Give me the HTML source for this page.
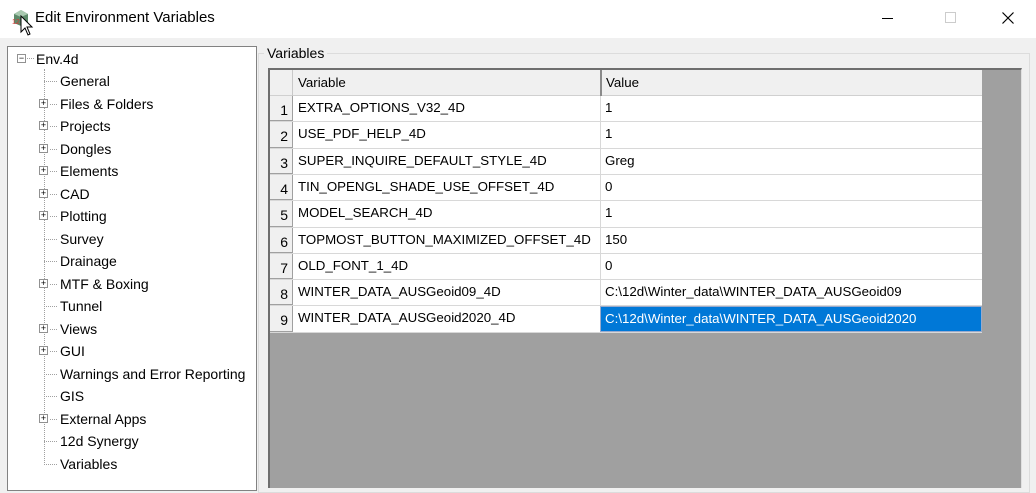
<!DOCTYPE html>
<html><head><style>
*{margin:0;padding:0;box-sizing:border-box}
body{width:1036px;height:483px;overflow:hidden;background:#f0f0f0;font-family:"Liberation Sans",sans-serif;font-size:14px;color:#000;position:relative}
.a{position:absolute;white-space:nowrap}
#title{left:0;top:0;width:1036px;height:38px;background:#fff}
#tree{left:7px;top:46px;width:250px;height:445px;background:#fff;border:1px solid #828282}
.ti{position:absolute;line-height:20px}
.box{position:absolute;width:9px;height:9px;border:1px solid #919191;background:#fff;font-size:9px;line-height:7px;text-align:center;color:#000}
.dl{position:absolute;border-top:1px dotted #a0a0a0;height:0}
.row{position:absolute;left:270px;width:712px;height:27px;background:#fff;border-bottom:1px solid #d8d8d8;font-size:13.3px}
.num{position:absolute;left:0;top:0;width:23px;height:27px;background:#f0f0f0;border-right:1px solid #a0a0a0;border-bottom:1px solid #a0a0a0;text-align:right;padding-right:4px;line-height:28px;font-size:14px}
.var{position:absolute;left:28px;line-height:24px}
.val{position:absolute;left:330px;width:382px;height:100%;border-left:1px solid #d8d8d8;padding-left:4px;line-height:24px}
</style></head><body>
<div id="title" class="a"></div>
<svg class="a" style="left:12px;top:9px" width="18" height="18"><polygon points="2,5 9,1 16,5 16,14 9,17 2,14" fill="#5d8a6a"/><polygon points="2,5 9,1 16,5 9,8" fill="#a9c9b0"/><text x="0" y="15" font-size="7" fill="#d33" font-family="Liberation Sans">12</text></svg>
<svg class="a" style="left:20px;top:15px" width="14" height="22"><path d="M1,1 L1,17 L5,13 L8,20 L10,19 L7,12 L12,12 Z" fill="#fff" stroke="#000"/></svg>
<div class="a" style="left:35px;top:9px;font-size:15px">Edit Environment Variables</div>
<div class="a" style="left:882px;top:18px;width:11px;border-top:1px solid #000"></div>
<div class="a" style="left:945px;top:12px;width:11px;height:11px;border:1px solid #ccc"></div>
<svg class="a" style="left:1002px;top:12px" width="12" height="12"><path d="M0.5,0.5 L11.5,11.5 M11.5,0.5 L0.5,11.5" stroke="#000" stroke-width="1.2"/></svg>

<div id="tree" class="a">
<div class="box" style="left:9px;top:7px">−</div>
<div class="dl" style="left:19px;top:11px;width:7px"></div>
<div class="ti" style="left:28px;top:2px">Env.4d</div>
<div class="a" style="left:36px;top:22px;height:396px;border-left:1px dotted #a0a0a0"></div>
</div>
<div id="items"></div>

<div class="a" style="left:258px;top:53px;width:772px;height:440px;border:1px solid #dcdcdc"></div>
<div class="a" style="left:264px;top:44px;background:#f0f0f0;padding:0 3px;line-height:18px">Variables</div>
<div class="a" style="left:268px;top:68px;width:754px;height:420px;background:#a0a0a0;border-top:2px solid #6e6e6e;border-left:2px solid #6e6e6e;border-right:1px solid #e0e0e0"></div>
<div class="a" style="left:270px;top:70px;width:712px;height:26px;background:#f0f0f0;border-bottom:1px solid #d0d0d0"></div>
<div class="a" style="left:270px;top:70px;width:23px;height:26px;border-right:1px solid #c8c8c8"></div>
<div class="a" style="left:298px;top:70px;line-height:26px;font-size:13.3px">Variable</div>
<div class="a" style="left:600px;top:70px;width:2px;height:26px;background:#8a8a8a"></div>
<div class="a" style="left:606px;top:70px;line-height:26px;font-size:13.3px">Value</div>
<div id="rows"></div>
<script>
var t=[["General",0],["Files & Folders",1],["Projects",1],["Dongles",1],["Elements",1],["CAD",1],["Plotting",1],["Survey",0],["Drainage",0],["MTF & Boxing",1],["Tunnel",0],["Views",1],["GUI",1],["Warnings and Error Reporting",0],["GIS",0],["External Apps",1],["12d Synergy",0],["Variables",0]];
var h="";t.forEach(function(e,i){var y=81+i*22.5;
h+='<div class="dl" style="left:'+(e[1]?50:44)+'px;top:'+Math.round(y)+'px;width:'+(e[1]?7:13)+'px"></div>';
if(e[1])h+='<div class="box" style="left:39px;top:'+Math.round(y-5)+'px">+</div>';
h+='<div class="ti" style="left:60px;top:'+Math.round(y-10)+'px">'+e[0].replace("&","&amp;")+'</div>';});
document.getElementById("items").innerHTML=h;
var r=[["EXTRA_OPTIONS_V32_4D","1"],["USE_PDF_HELP_4D","1"],["SUPER_INQUIRE_DEFAULT_STYLE_4D","Greg"],["TIN_OPENGL_SHADE_USE_OFFSET_4D","0"],["MODEL_SEARCH_4D","1"],["TOPMOST_BUTTON_MAXIMIZED_OFFSET_4D","150"],["OLD_FONT_1_4D","0"],["WINTER_DATA_AUSGeoid09_4D","C:\\12d\\Winter_data\\WINTER_DATA_AUSGeoid09"],["WINTER_DATA_AUSGeoid2020_4D","C:\\12d\\Winter_data\\WINTER_DATA_AUSGeoid2020"]];
h="";r.forEach(function(e,i){var y=96+Math.round(i*26.3);var sel=i==8;
h+='<div class="row" style="top:'+y+'px;height:'+(i==8?27:(96+Math.round((i+1)*26.3)-y))+'px"><div class="num" style="height:100%">'+(i+1)+'</div><div class="var">'+e[0]+'</div><div class="val"'+(sel?' style="background:#0078d7;color:#fff;border:1px solid #9ac"':'')+'>'+e[1]+'</div></div>';});
document.getElementById("rows").innerHTML=h;
</script>
</body></html>
